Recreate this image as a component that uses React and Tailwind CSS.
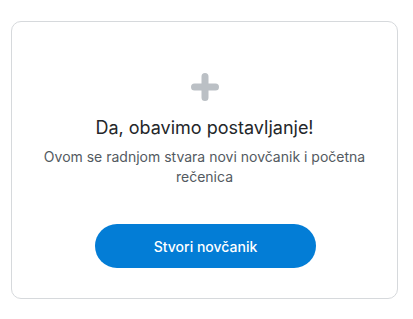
const PlusIcon = () => (
    <svg width="28" height="28" viewBox="0 0 28 28" fill="none">
        <path d="M14 3.5v21M3.5 14h21" stroke="#bbc0c5" strokeWidth="7" strokeLinecap="round" />
    </svg>
);

/**
 * Create wallet card
 */
const App = () => {
    return (
        <div className="w-[413px] h-[319px] bg-white pl-[11px] pr-[15px] pt-[21px] font-['Inter',sans-serif]">
            <div className="h-[278px] rounded-[10px] border border-[#d6d9dc] flex flex-col items-center pt-[51px]">
                <PlusIcon />
                <h2 className="mt-[14px] text-[18px] leading-[26px] text-[#24272a]">
                    Da, obavimo postavljanje!
                </h2>
                <p className="mt-[6px] px-[20px] text-center text-[14px] leading-[20px] text-[#535a61]">
                    Ovom se radnjom stvara novi novčanik i početna rečenica
                </p>
                <button
                    type="button"
                    className="mt-[37px] ml-[2px] w-[221px] h-[44px] rounded-full bg-[#037dd6] text-white text-[14px] font-medium"
                >
                    Stvori novčanik
                </button>
            </div>
        </div>
    );
};

export default App;
